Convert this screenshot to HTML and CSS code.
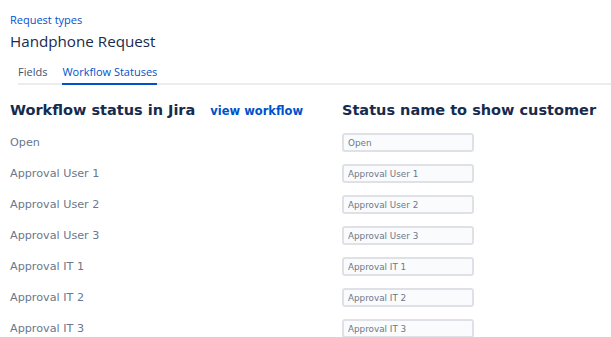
FILE: index.html
```html
<!DOCTYPE html>
<html lang="en">
<head>
  <meta charset="UTF-8">
  <title>Handphone Request - Workflow Statuses</title>
  <link rel="stylesheet" href="styles.css">
</head>
<body>
  <div class="page-header">
    <a class="breadcrumb" href="#">Request types</a>
    <h1>Handphone Request</h1>
  </div>

  <div class="tabs">
    <a class="tab" href="#">Fields</a>
    <a class="tab active" href="#">Workflow Statuses</a>
  </div>

  <div class="status-table">
    <div class="col-head">
      <h2>Workflow status in Jira</h2>
      <a class="view-link" href="#">view workflow</a>
    </div>
    <div class="col-head">
      <h2>Status name to show customer</h2>
    </div>

    <div class="status-label">Open</div>
    <div><input class="status-input" type="text" value="Open"></div>

    <div class="status-label">Approval User 1</div>
    <div><input class="status-input" type="text" value="Approval User 1"></div>

    <div class="status-label">Approval User 2</div>
    <div><input class="status-input" type="text" value="Approval User 2"></div>

    <div class="status-label">Approval User 3</div>
    <div><input class="status-input" type="text" value="Approval User 3"></div>

    <div class="status-label">Approval IT 1</div>
    <div><input class="status-input" type="text" value="Approval IT 1"></div>

    <div class="status-label">Approval IT 2</div>
    <div><input class="status-input" type="text" value="Approval IT 2"></div>

    <div class="status-label">Approval IT 3</div>
    <div><input class="status-input" type="text" value="Approval IT 3"></div>
  </div>
</body>
</html>
```

FILE: styles.css
```css
body {
  margin: 0;
  padding: 12px 0 0 10px;
  font-family: "Open Sans", Arial, sans-serif;
  background-color: #ffffff;
  color: #172b4d;
}
a {
  text-decoration: none;
}
.page-header {
  margin-bottom: 13px;
}
.breadcrumb {
  display: block;
  font-size: 11px;
  line-height: 16px;
  color: #0052cc;
}
.page-header h1 {
  margin: 3px 0 0;
  font-size: 15.2px;
  line-height: 20px;
  font-weight: 400;
  color: #172b4d;
}
.tabs {
  display: flex;
  gap: 15px;
  margin-left: 8px;
  border-bottom: 2px solid #ebecf0;
}
.tab {
  font-size: 11px;
  line-height: 16px;
  padding-bottom: 3px;
  color: #42526e;
  margin-bottom: -2px;
  border-bottom: 2px solid transparent;
}
.tab.active {
  color: #0052cc;
  border-bottom-color: #0052cc;
}
.status-table {
  display: grid;
  grid-template-columns: 332px 1fr;
  grid-template-rows: 35px;
  grid-auto-rows: 31px;
  align-items: center;
  margin-top: 7px;
}
.col-head {
  display: flex;
  align-items: baseline;
  gap: 15px;
}
.col-head h2 {
  margin: 0;
  font-family: "DejaVu Sans", Verdana, sans-serif;
  font-size: 14.5px;
  font-weight: 700;
  color: #172b4d;
}
.view-link {
  font-family: "DejaVu Sans", Verdana, sans-serif;
  font-size: 11.5px;
  font-weight: 700;
  color: #0052cc;
}
.status-label {
  font-family: "DejaVu Sans", Verdana, sans-serif;
  font-size: 11.2px;
  color: #6b778c;
}
.status-input {
  display: block;
  box-sizing: border-box;
  width: 132px;
  height: 19px;
  padding: 0 4px;
  border: 2px solid #dfe1e6;
  border-radius: 3px;
  background-color: #fafbfc;
  font-family: "DejaVu Sans", Verdana, sans-serif;
  font-size: 8.8px;
  color: #6b778c;
}
```
